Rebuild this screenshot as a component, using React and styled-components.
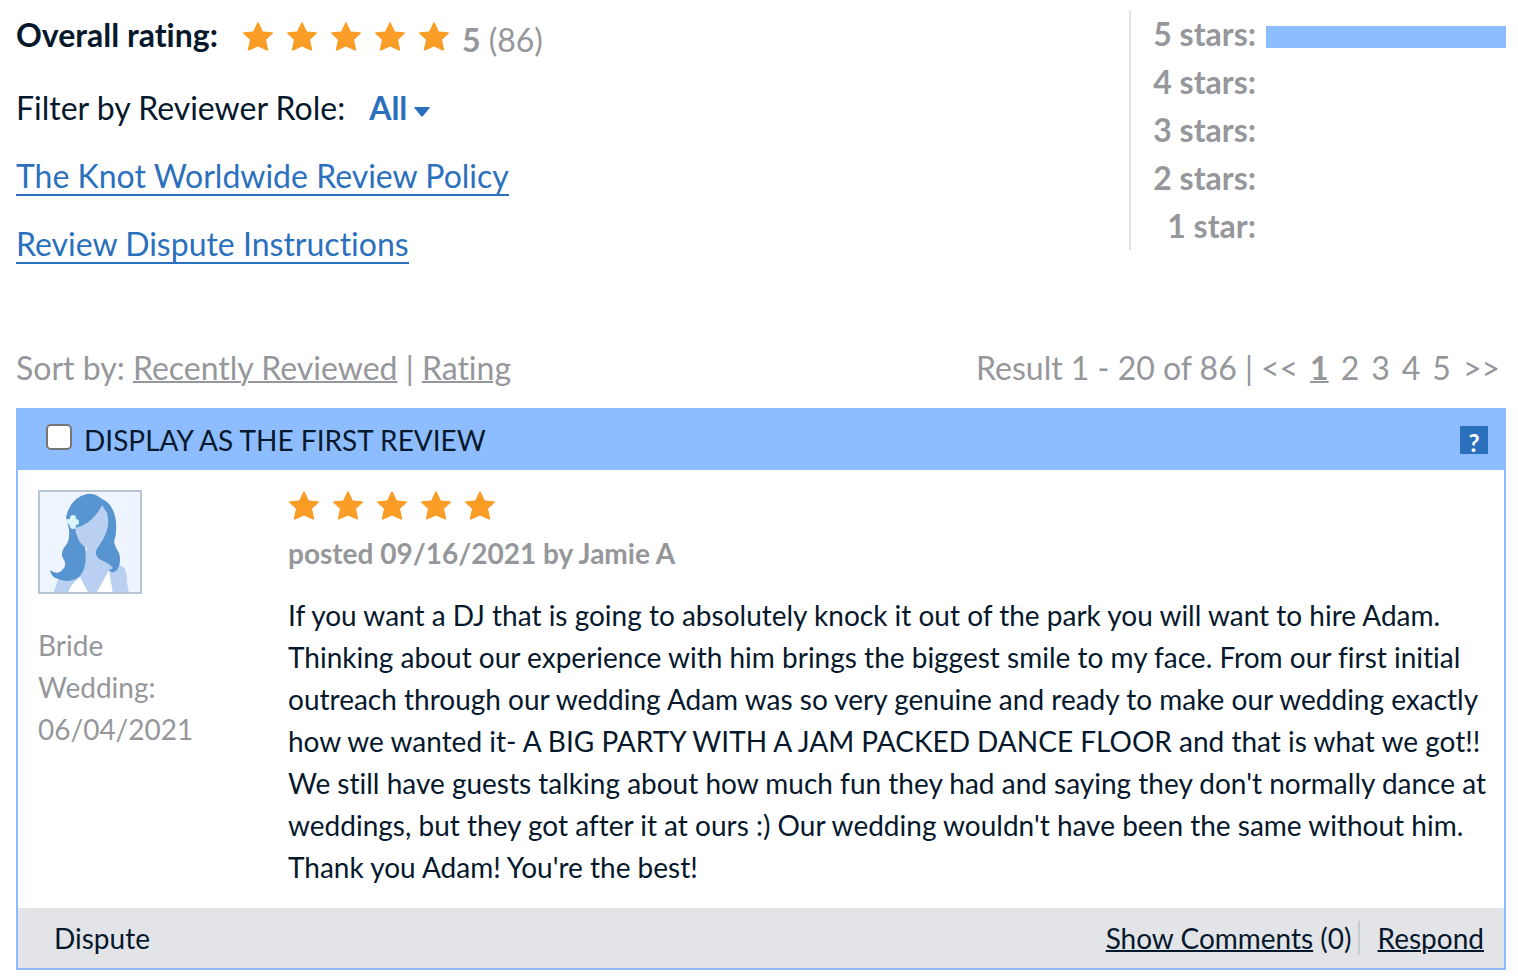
import React, { useState } from 'react';
import styled, { createGlobalStyle } from 'styled-components';

const GlobalStyle = createGlobalStyle`
  * {
    box-sizing: border-box;
  }

  body {
    margin: 0;
    background-color: #ffffff;
    color: #06182c;
    font-family: Lato, "Liberation Sans", sans-serif;
    font-size: 32px;
    line-height: 48px;
    font-variant-ligatures: none;
  }
`;

const Page = styled.main`
  padding: 10px 12px 8px 16px;
`;

const Summary = styled.section`
  display: flex;
  justify-content: space-between;
  align-items: flex-start;
`;

const SummaryInfo = styled.div`
  display: flex;
  flex-direction: column;
  align-items: flex-start;
  gap: 20px;
`;

const RatingRow = styled.div`
  display: flex;
  align-items: center;
  height: 54px;
`;

const RatingTitle = styled.h1`
  margin: 0 24px 4px 0;
  font-size: 32px;
  line-height: 48px;
  font-weight: 700;
`;

const RatingScore = styled.span`
  margin: 6px 0 0 12px;
  color: #95979b;
`;

const StarList = styled.span`
  display: flex;
  gap: 12px;
`;

const StarIcon = styled.svg`
  display: block;
  width: 32px;
  height: 32px;
  fill: #f99d27;
`;

const FilterRow = styled.div`
  display: flex;
  align-items: center;
`;

const RoleField = styled.span`
  display: flex;
  align-items: center;
  margin-left: 24px;
  color: #2b70bd;
`;

const RoleSelect = styled.select`
  appearance: none;
  padding: 0;
  border: none;
  background: transparent;
  color: inherit;
  font: inherit;
  font-weight: 700;
  cursor: pointer;
`;

const Caret = styled.svg`
  width: 16px;
  height: 10px;
  margin: 8px 0 0 6px;
  fill: currentColor;
`;

const PolicyLink = styled.a`
  margin-bottom: 10px;
  border-bottom: 2px solid #2b70bd;
  color: #2b70bd;
  line-height: 36px;
  text-decoration: none;
`;

const Links = styled.div`
  display: flex;
  flex-direction: column;
  align-items: flex-start;
  gap: 20px;
  padding-top: 6px;
`;

const Breakdown = styled.dl`
  display: grid;
  grid-template-columns: auto 240px;
  column-gap: 10px;
  margin: 0;
  padding-left: 22px;
  border-left: 2px solid #e2e3e6;
  color: #95979b;
`;

const BreakdownLabel = styled.dt`
  font-weight: 700;
  text-align: right;
`;

const BreakdownBar = styled.dd`
  display: flex;
  align-items: center;
  margin: 0;
  padding-top: 6px;
`;

const BarFill = styled.span`
  height: 22px;
  background-color: #8dbdff;
`;

const ListToolbar = styled.nav`
  display: flex;
  justify-content: space-between;
  margin-top: 70px;
  padding-right: 6px;
  color: #95979b;
`;

const GrayLink = styled.a`
  color: inherit;
  text-decoration: underline;
  text-decoration-thickness: 2px;
`;

const Pages = styled.span`
  display: inline-flex;
  gap: 12px;
  margin-left: 8px;
`;

const PageLink = styled.a`
  color: inherit;
  font-weight: ${props => (props.$current ? 700 : 400)};
  text-decoration: ${props => (props.$current ? 'underline' : 'none')};
  text-decoration-thickness: 2px;
`;

const Card = styled.article`
  margin-top: 16px;
  border: 2px solid #8dbdff;
  font-size: 28px;
  line-height: 42px;
`;

const CardHeader = styled.header`
  display: flex;
  justify-content: space-between;
  align-items: center;
  height: 60px;
  padding: 0 16px 0 28px;
  background-color: #8dbdff;
`;

const FirstReviewLabel = styled.label`
  display: flex;
  align-items: center;
  gap: 12px;
  text-transform: uppercase;
`;

const Checkbox = styled.input`
  appearance: none;
  width: 26px;
  height: 26px;
  margin: 0 0 6px;
  border: 2px solid #767676;
  border-radius: 5px;
  background-color: #ffffff;

  &:checked {
    background-color: #2b70bd;
  }
`;

const HelpButton = styled.button`
  width: 28px;
  height: 28px;
  padding: 6px 0 0;
  border: none;
  background-color: #2b70bd;
  color: #ffffff;
  font-family: inherit;
  font-size: 24px;
  line-height: 22px;
  font-weight: 700;
  cursor: pointer;
`;

const CardBody = styled.div`
  display: grid;
  grid-template-columns: 230px 1fr;
  column-gap: 20px;
  padding: 20px 12px 20px 20px;
`;

const Reviewer = styled.div`
  color: #95979b;
`;

const Avatar = styled.svg`
  display: block;
  width: 104px;
  height: 104px;
  margin-bottom: 30px;
`;

const WeddingInfo = styled.p`
  width: 160px;
  margin: 0;
`;

const Posted = styled.p`
  margin: 10px 0 20px;
  color: #95979b;
  font-weight: 700;
`;

const ReviewText = styled.p`
  margin: 0;
`;

const CardFooter = styled.footer`
  display: flex;
  justify-content: space-between;
  align-items: center;
  height: 60px;
  padding: 0 20px 0 36px;
  background-color: #e3e4e7;
`;

const FooterActions = styled.div`
  display: flex;
  align-items: center;
`;

const FooterLink = styled.a`
  color: inherit;
  text-decoration: ${props => (props.$plain ? 'none' : 'underline')};
  text-decoration-thickness: 2px;
`;

const Divider = styled.span`
  width: 2px;
  height: 34px;
  margin: 0 18px 0 6px;
  background-color: #c9cbcf;
`;

const breakdown = [
  { label: '5 stars:', percent: 100 },
  { label: '4 stars:', percent: 0 },
  { label: '3 stars:', percent: 0 },
  { label: '2 stars:', percent: 0 },
  { label: '1 star:', percent: 0 }
];

const pages = ['<<', '1', '2', '3', '4', '5', '>>'];

const Stars = ({ count }) => (
  <StarList role="img" aria-label={`${count} stars`}>
    {Array.from({ length: count }, (_, i) => (
      <StarIcon key={i} viewBox="0 0 32 32">
        <path d="M16 1.2 Q16.7 1.2 17.1 2.4 L20.8 10.6 L30 11.2 Q31.6 11.5 30.6 12.7 L24 18.8 L26.2 28.4 Q26.2 30 24.8 29.4 L16 25.4 L7.2 29.4 Q5.8 30 5.8 28.4 L8 18.8 L1.4 12.7 Q.4 11.5 2 11.2 L11.2 10.6 L14.9 2.4 Q15.3 1.2 16 1.2Z" />
      </StarIcon>
    ))}
  </StarList>
);

const BrideAvatar = () => (
  <Avatar viewBox="0 0 104 104" role="img" aria-label="Bride">
    <rect width="104" height="104" fill="#eff5ff" />
    <path d="M15 104 L20 90 L46 78 L49 56 L60 56 L62 70 L84 76 Q89 78 89 92 L91 104Z" fill="#b9d0f3" />
    <path d="M30 104 Q30 97 42 87 L51 104Z M58 104 L71 80 L75 104Z" fill="#ffffff" />
    <path d="M36 38 Q38 51 47 57 L59 57 Q69 48 71 37 L71 20 L61 13Z" fill="#b9d0f3" />
    <path d="M49 4 Q57 3 64 9 Q76 14 78 32 Q79 43 76 52 Q77 57 81 63 Q84 73 79 80 Q73 85 70 79 Q72 81 75 78 Q71 73 65 71 Q57 68 58 61 Q60 56 64 51 Q73 37 69 23 L64 15 Q59 26 49 33 Q43 37 37 38 Q39 52 47 57 Q50 76 42 86 Q33 94 20 89 Q13 87 12 80 Q20 86 25 79 Q29 75 26 70 Q21 64 28 55 Q32 50 31 39 L28 27 Q33 7 49 4Z" fill="#5895d0" />
    <g fill="#d8f6ff">
      <circle cx="34" cy="32" r="4" />
      <circle cx="35" cy="28" r="3" />
      <circle cx="38" cy="32" r="3" />
      <circle cx="35" cy="36" r="3" />
      <circle cx="30" cy="31" r="2" />
    </g>
    <rect x="1" y="1" width="102" height="102" fill="none" stroke="#b8c5d5" strokeWidth="2" />
  </Avatar>
);

const Review = () => {
  const [first, setFirst] = useState(false);

  return (
    <Card>
      <CardHeader>
        <FirstReviewLabel>
          <Checkbox type="checkbox" checked={first} onChange={e => setFirst(e.target.checked)} />
          Display as the first review
        </FirstReviewLabel>
        <HelpButton type="button">?</HelpButton>
      </CardHeader>

      <CardBody>
        <Reviewer>
          <BrideAvatar />
          <WeddingInfo>Bride<br />Wedding: 06/04/2021</WeddingInfo>
        </Reviewer>
        <div>
          <Stars count={5} />
          <Posted>posted 09/16/2021 by Jamie A</Posted>
          <ReviewText>
            If you want a DJ that is going to absolutely knock it out of the park you will want to hire Adam.
            Thinking about our experience with him brings the biggest smile to my face. From our first initial
            outreach through our wedding Adam was so very genuine and ready to make our wedding exactly
            how we wanted it- A BIG PARTY WITH A JAM PACKED DANCE FLOOR and that is what we got!!
            We still have guests talking about how much fun they had and saying they don't normally dance at
            weddings, but they got after it at ours :) Our wedding wouldn't have been the same without him.
            Thank you Adam! You're the best!
          </ReviewText>
        </div>
      </CardBody>

      <CardFooter>
        <FooterLink href="#dispute" $plain>Dispute</FooterLink>
        <FooterActions>
          <span><FooterLink href="#comments">Show Comments</FooterLink> (0)</span>
          <Divider />
          <FooterLink href="#respond">Respond</FooterLink>
        </FooterActions>
      </CardFooter>
    </Card>
  );
};

const App = () => (
  <Page>
    <GlobalStyle />
    <Summary>
      <SummaryInfo>
        <RatingRow>
          <RatingTitle>Overall rating:</RatingTitle>
          <Stars count={5} />
          <RatingScore><b>5</b> (86)</RatingScore>
        </RatingRow>
        <FilterRow>
          <label htmlFor="role">Filter by Reviewer Role:</label>
          <RoleField>
            <RoleSelect id="role">
              <option>All</option>
            </RoleSelect>
            <Caret viewBox="0 0 16 10">
              <path d="M.8 0 H15.2 Q16 .3 15.4 1.2 L9 9 Q8 10 7 9 L.6 1.2 Q0 .3 .8 0Z" />
            </Caret>
          </RoleField>
        </FilterRow>
        <Links>
          <PolicyLink href="#policy">The Knot Worldwide Review Policy</PolicyLink>
          <PolicyLink href="#instructions">Review Dispute Instructions</PolicyLink>
        </Links>
      </SummaryInfo>

      <Breakdown>
        {breakdown.map(row => (
          <React.Fragment key={row.label}>
            <BreakdownLabel>{row.label}</BreakdownLabel>
            <BreakdownBar>
              <BarFill style={{ width: `${row.percent}%` }} />
            </BreakdownBar>
          </React.Fragment>
        ))}
      </Breakdown>
    </Summary>

    <ListToolbar>
      <div>
        Sort by: <GrayLink href="#recent">Recently Reviewed</GrayLink> | <GrayLink href="#rating">Rating</GrayLink>
      </div>
      <div>
        Result 1 - 20 of 86 |
        <Pages>
          {pages.map(page => (
            <PageLink key={page} href="#page" $current={page === '1'}>{page}</PageLink>
          ))}
        </Pages>
      </div>
    </ListToolbar>

    <Review />
  </Page>
);

export default App;
